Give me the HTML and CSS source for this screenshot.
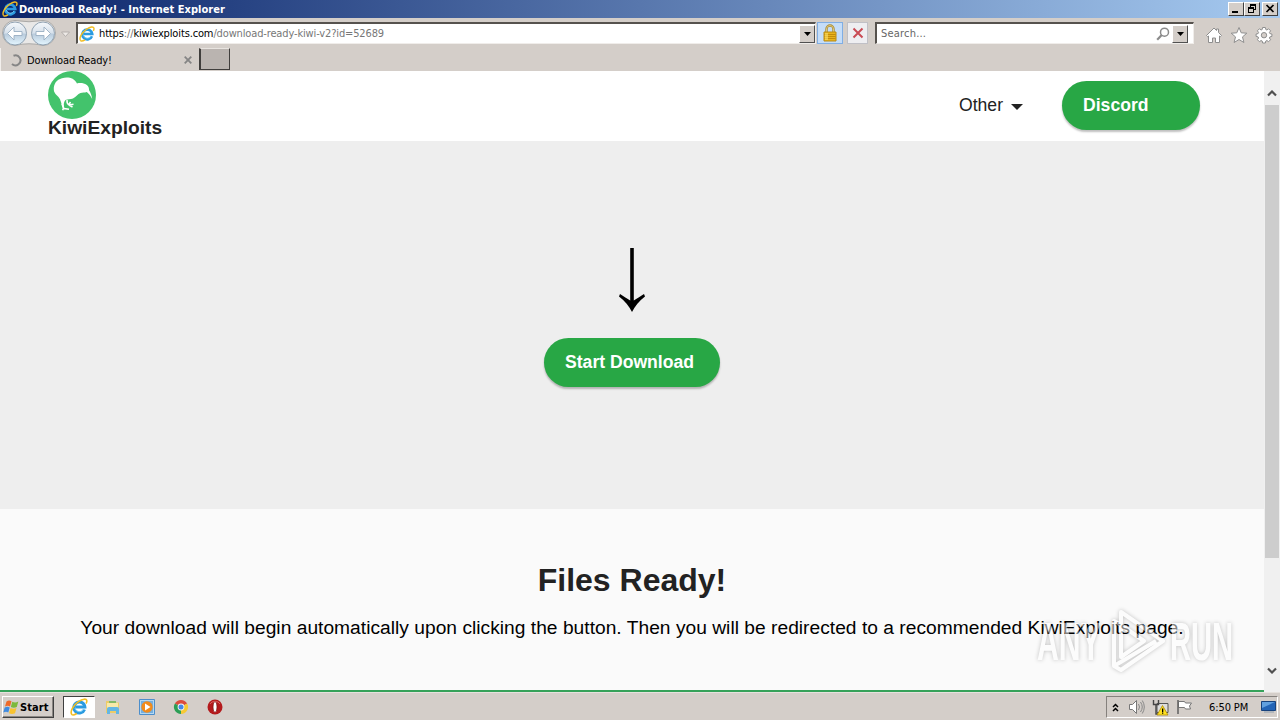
FILE: index.html
```html
<!DOCTYPE html>
<html lang="en">
<head>
	<meta charset="UTF-8">
	<meta name="viewport" content="width=device-width, initial-scale=1.0">
	<title>Download Ready!</title>
	<link rel="stylesheet" href="styles.css">
</head>
<body>
	<!-- Shared icons -->
	<svg class="sprite" width="0" height="0">
		<symbol id="ie" viewBox="0 0 16 16">
			<path d="M12.9 10.2A4.9 4.9 0 1 1 13.2 8H5" fill="none" stroke="#2b9be0" stroke-width="2.7"/>
			<path d="M12.2 9.8A4.2 4.2 0 0 1 4.3 9" fill="none" stroke="#7fd2fa" stroke-width=".8"/>
			<path d="M1.7 14.8C-.5 12 3 6.500 7.500 3.300 11 .8 15 0 15 2.700c0 .8-.3 1.500-.7 2.200" fill="none" stroke="#f2bd22" stroke-width="1.400"/>
			<path d="M1.700 14.800c1 .6 2.700 0 4.300-1" fill="none" stroke="#f2bd22" stroke-width="1.400"/>
		</symbol>
	</svg>

	<header class="titlebar">
		<svg class="titlebar-icon"><use href="#ie"/></svg>
		<span class="titlebar-text">Download Ready! - Internet Explorer</span>
		<div class="window-buttons">
			<span class="window-btn"><svg width="14" height="12"><path d="M3 8h6v2H3z"/></svg></span>
			<span class="window-btn"><svg width="14" height="12"><path d="M5 1h6v6H9V6h1V3H6v1H5zM3 4h6v6H3zm1 2v3h4V6z" fill-rule="evenodd"/></svg></span>
			<span class="window-btn window-btn-close"><svg width="14" height="12"><path d="M3.500 2l7 7m0-7l-7 7" stroke="#000" stroke-width="1.700"/></svg></span>
		</div>
	</header>

	<div class="toolbar">
		<svg class="nav-buttons" width="72" height="30" viewBox="0 0 72 30">
			<defs>
				<linearGradient id="orb" x1="0" y1="0" x2="0" y2="1">
					<stop offset="0" stop-color="#f6f9fc"/>
					<stop offset=".48" stop-color="#d7e1eb"/>
					<stop offset=".52" stop-color="#b9cbdc"/>
					<stop offset="1" stop-color="#e4f6ff"/>
				</linearGradient>
			</defs>
			<path d="M15 2.500Q29 5 43 2.500A12.500 12.500 0 0 1 43 27.500Q29 24 15 27.500A12.500 12.500 0 0 1 15 2.500" fill="#e9e8e7" stroke="#aaa9a7"/>
			<circle cx="15" cy="15.500" r="11.500" fill="url(#orb)" stroke="#92a3b3"/>
			<circle cx="43" cy="15.500" r="11.500" fill="url(#orb)" stroke="#92a3b3"/>
			<path d="M14 9l-6.500 6.500L14 22v-4.500h8v-4h-8z" fill="#fff" stroke="#9aafc3" stroke-width=".9"/>
			<path d="M44 9l6.500 6.500L44 22v-4.500h-8v-4h8z" fill="#fff" stroke="#9aafc3" stroke-width=".9"/>
			<path d="M61.500 14h8l-4 4.500z" fill="#eeeae7" stroke="#b4afac"/>
		</svg>
		<div class="field address">
			<svg class="address-icon"><use href="#ie"/></svg>
			<span class="address-text">https<i>://</i>kiwiexploits.com<i>/download-ready-kiwi-v2?id=52689</i></span>
			<span class="dropdown"><svg width="7" height="4"><path d="M0 0h7L3.500 4z"/></svg></span>
		</div>
		<span class="tool-btn tool-btn-lock">
			<svg width="16" height="18" viewBox="0 0 16 18">
				<path d="M4.500 9V5a3.500 3.500 0 0 1 7 0v4" fill="none" stroke="#a88a35" stroke-width="2.400"/>
				<path d="M4.500 9V5a3.500 3.500 0 0 1 7 0v4" fill="none" stroke="#ead58b" stroke-width=".8"/>
				<path d="M2 8h12v9H2z" fill="#e9b41c" stroke="#b98a13"/>
				<path d="M2.500 10.500h11m-11 2h11m-11 2h11" stroke="#b98108" stroke-width=".8"/>
				<path d="M3 9h3v7H3z" fill="#fbe16b" opacity=".6"/>
			</svg>
		</span>
		<span class="tool-btn tool-btn-stop">
			<svg width="12" height="12"><path d="M1.500 1.500l9 9m0-9l-9 9" stroke="#c94b55" stroke-width="2"/></svg>
		</span>
		<div class="field search">
			<span class="search-text">Search...</span>
			<svg class="search-icon" width="14" height="14"><circle cx="8.500" cy="5.200" r="4" fill="none" stroke="#8b8b8b" stroke-width="1.500"/><path d="M5.700 8L1.200 12.700" stroke="#8b8b8b" stroke-width="2.200"/></svg>
			<span class="dropdown"><svg width="7" height="4"><path d="M0 0h7L3.500 4z"/></svg></span>
		</div>
		<div class="commands">
			<svg width="18" height="18" viewBox="0 0 18 18"><path d="M1.500 9.500L9 2l2.500 2.500V3h2v3.500l3 3-1.200 1.200-.8-.7v6.500h-4V12h-3v4.500h-4V10l-.8.700z" fill="#fff" stroke="#8e8e8e"/></svg>
			<svg width="18" height="18" viewBox="0 0 18 18"><path d="M9 1.500l2.200 5.300 5.600.4-4.300 3.700 1.400 5.600L9 13.500l-4.900 3 1.400-5.600L1.200 7.200l5.600-.4z" fill="#fff" stroke="#8e8e8e"/></svg>
			<svg width="18" height="18" viewBox="0 0 18 18"><path d="M7.600 1.500h2.800l.4 2 1.100.5 1.700-1.200 2 2L14.400 6.500l.5 1.100 2 .4v2.400l-2 .5-.5 1.100 1.200 1.700-2 2-1.700-1.200-1.100.5-.4 2H7.600l-.4-2-1.100-.5-1.700 1.200-2-2L3.600 12l-.5-1.100-2-.5V8l2-.4.500-1.100-1.200-1.700 2-2L6.100 4l1.100-.5z" fill="#fff" stroke="#8e8e8e"/><circle cx="9" cy="9.200" r="2.700" fill="#d4cec9" stroke="#8e8e8e"/></svg>
		</div>
	</div>

	<nav class="tabs">
		<div class="tab">
			<svg class="tab-spinner" width="13" height="13"><path d="M4.500 1.700A5 5 0 1 1 3 10" fill="none" stroke="#858585" stroke-width="2"/></svg>
			<span class="tab-text">Download Ready!</span>
			<svg class="tab-close" width="8" height="8"><path d="M.7.700l6.600 6.600m0-6.600L.7 7.300" stroke="#858585" stroke-width="1.800"/></svg>
		</div>
		<div class="tab-new"></div>
	</nav>

	<div class="viewport">
		<main class="page">
			<div class="site-header">
				<a class="brand">
					<svg width="48" height="48" viewBox="0 0 48 48">
						<circle cx="24" cy="24" r="24" fill="#43c36c"/>
						<path d="M5.800 18.500C5.500 13 8.500 8.500 14 7.200c6-1.500 12-.5 15 5.300 3-.8 7-.5 9.500 1.300 2.300 1.500 2.500 3.500 2.600 5.400 1.600 2.800 2.700 5.400 3.100 8.800-1.500-3-3.200-5.300-5.400-7-2.400.8-4.300.4-6.300 1-3 1-4 4-7.500 5.400-2.500 1-5.500.6-7.500 1.600-1.400 1.600-2 3.500-1.500 6.200l-1.500 1.800c-1.200-4.500-1.500-8-4-11-1.800-2.300-4.500-3.500-4.700-7.500z" fill="#fff"/>
						<path d="M14 33l2 4.500 5 .8M15.500 37l-.8 2.300M19 29c-.3 2.500.6 4.200 2.300 5l4.200-.8M21 34l3.500 2M21 33.500l1.500-2.500" fill="none" stroke="#fff" stroke-width="1.500"/>
					</svg>
					<span class="brand-name">KiwiExploits</span>
				</a>
				<div class="menu">
					<a class="menu-link">Other <svg width="12" height="6"><path d="M0 0h12L6 6z" fill="#222"/></svg></a>
					<a class="btn btn-discord">Discord</a>
				</div>
			</div>
			<section class="hero">
				<svg class="hero-arrow" width="28" height="66" viewBox="0 0 28 66"><path d="M12.200 1h3.600v52.500c3-2 6.500-4 10.200-6.500l1 2.500C21 54 17 59 14 65 11 59 7 54 1 49.500L2 47c3.700 2.500 7.200 4.500 10.200 6.500z"/></svg>
				<a class="btn btn-download">Start Download</a>
			</section>
			<section class="files">
				<h1>Files Ready!</h1>
				<p>Your download will begin automatically upon clicking the button. Then you will be redirected to a recommended KiwiExploits page.</p>
			</section>
		</main>
		<div class="scrollbar">
			<span class="scroll-arrow"><svg width="10" height="7"><path d="M1 5.500l4-4 4 4" fill="none" stroke="#505050" stroke-width="2.200"/></svg></span>
			<span class="scroll-thumb"></span>
			<span class="scroll-arrow scroll-arrow-down"><svg width="10" height="7"><path d="M1 1.500l4 4 4-4" fill="none" stroke="#505050" stroke-width="2.200"/></svg></span>
		</div>
		<div class="watermark">
			<span class="watermark-any">ANY</span>
			<svg width="58" height="64" viewBox="0 0 58 64"><path d="M14 3l42 29-42 29-7-4V12l7 4zM14 16v32l23-16zM7 57l42-25" fill="none" stroke="#fff" stroke-width="4" stroke-linejoin="round"/></svg>
			<span class="watermark-run">RUN</span>
		</div>
	</div>

	<footer class="taskbar">
		<div class="start">
			<svg width="17" height="16" viewBox="0 0 17 16">
				<path d="M3.500 2.500C5.500 1 7 1.300 8.500 2.300L7 7.500C5.500 6.500 4 6.500 2 7.500z" fill="#ee6a2a"/>
				<path d="M9.300 2.800c2 1 4 1 6-.3L13.800 8c-2 1-4 1-6 0z" fill="#7cb93c"/>
				<path d="M1.700 8.500c2-1 3.500-1 5 0L5.300 13.500c-1.500-1-3-1-5 0z" fill="#3f8be0"/>
				<path d="M7.500 9c2 1 4 1 6 0L12 14.300c-2 1-4 1-6 0z" fill="#f8c330"/>
			</svg>
			<span>Start</span>
		</div>
		<div class="task task-active"><svg width="18" height="18"><use href="#ie"/></svg></div>
		<div class="task">
			<svg width="18" height="18" viewBox="0 0 18 18"><path d="M2 3h5l1 1.500h7V15H2z" fill="#edcc68"/><path d="M3 5h11v5H3z" fill="#f9e9a9"/><path d="M5 3h7v2H5z" fill="#84b966"/><path d="M3 11q0-2 2-2h8q2 0 2 2v5h-3v-3H6v3H3z" fill="#64b6e4"/></svg>
		</div>
		<div class="task">
			<svg width="18" height="18" viewBox="0 0 18 18"><path d="M1.500 1.500h15v15h-15z" fill="#b4d8f2" stroke="#4c8ecb"/><path d="M3 3h12v12H3z" fill="#74afe0"/><circle cx="9" cy="9" r="5.700" fill="#f28b1b"/><path d="M7 5.500v7L12.500 9z" fill="#fff"/></svg>
		</div>
		<div class="task">
			<svg width="16" height="16" viewBox="0 0 16 16"><path d="M8 8L1.900 4.500A7 7 0 0 1 14.100 4.500z" fill="#dc4b3d"/><path d="M8 8L1.900 4.500A7 7 0 0 0 8 15z" fill="#2c9e55"/><path d="M8 8L14.100 4.500A7 7 0 0 1 8 15z" fill="#f7c933"/><circle cx="8" cy="8" r="3.400" fill="#f5f5f5"/><circle cx="8" cy="8" r="2.500" fill="#4687e8"/></svg>
		</div>
		<div class="task">
			<svg width="16" height="16" viewBox="0 0 16 16"><circle cx="8" cy="8" r="7.500" fill="#b41a1c"/><path d="M3 5a6 6 0 0 1 10 0" fill="none" stroke="#dc6261"/><ellipse cx="8" cy="8" rx="2" ry="5.300" fill="#fff" stroke="#761010" stroke-width=".7"/></svg>
		</div>
		<div class="tray">
			<svg width="7" height="9"><path d="M1 4l2.500-2.500L6 4M1 8l2.500-2.500L6 8" fill="none" stroke="#000" stroke-width="1.500"/></svg>
			<svg class="tray-sound" width="17" height="16" viewBox="0 0 17 16"><path d="M1.500 5.500h3l4-4v13l-4-4h-3z" fill="#fff" stroke="#777"/><path d="M10.500 5q2 3 0 6M12.500 3q3.500 5 0 10M14.300 1.500q4 6.500 0 13" fill="none" stroke="#888"/></svg>
			<svg class="tray-net" width="17" height="17" viewBox="0 0 17 17"><path d="M5 4.500h11v9H5z" fill="#ddd" stroke="#555"/><path d="M1.500 1v4.500h5V1M4 5.500V15h4" fill="none" stroke="#444" stroke-width="1.400"/><path d="M10.500 6.500l5.500 9.500H5z" fill="#ffe11f" stroke="#ac8a0b" stroke-width=".8"/><path d="M10 9.500h1.300v3.500H10zm0 4h1.300v1.200H10z"/></svg>
			<svg class="tray-flag" width="17" height="16" viewBox="0 0 17 16"><path d="M2.500 2.500h6l1 1.500h6l-2 3 1 3h-5l-1-1.500h-6z" fill="#fff" stroke="#777"/><path d="M2 1v14" stroke="#666" stroke-width="1.600"/></svg>
			<span class="clock">6:50 PM</span>
			<svg class="tray-desktop" width="15" height="14" viewBox="0 0 15 14"><path d="M.5 1.500h14v9H.5z" fill="#2364b6" stroke="#17427d"/><path d="M1 2h13L1 8z" fill="#61a0df"/><path d="M3 12h10" stroke="#8f9eae"/></svg>
		</div>
	</footer>
</body>
</html>
```
FILE: styles.css
```css
* {
	box-sizing: border-box;
}

body {
	display: flex;
	flex-direction: column;
	width: 1280px;
	height: 720px;
	margin: 0;
	overflow: hidden;
	background-color: #d4cec9;
	color: #000;
	font-family: "DejaVu Sans Condensed", "DejaVu Sans", sans-serif;
	font-stretch: condensed;
	font-size: 11px;
}

svg {
	display: block;
	flex: none;
}

.sprite {
	position: absolute;
}

/* Window */
.titlebar {
	display: flex;
	flex: none;
	height: 18px;
	align-items: center;
	padding: 0 2px;
	background: linear-gradient(90deg, #0a246a, #a6caf0);
	color: #fff;
	white-space: nowrap;
}

.titlebar-icon {
	width: 16px;
	height: 16px;
	margin-right: 1px;
}

.titlebar-text {
	font-weight: bold;
	letter-spacing: .04px;
}

.window-buttons {
	display: flex;
	margin-left: auto;
}

.window-btn {
	width: 16px;
	height: 14px;
	border: 1px solid;
	border-color: #fff #404040 #404040 #fff;
	background-color: #d4cec9;
}

.window-btn-close {
	margin-left: 2px;
}

.toolbar {
	display: flex;
	flex: none;
	height: 30px;
	align-items: center;
}

.nav-buttons {
	margin-right: 4px;
}

.field {
	display: flex;
	height: 22px;
	align-items: center;
	border: 1px solid #f0edea;
	border-top: 2px solid #56524e;
	border-left: 2px solid #56524e;
	background-color: #fff;
	white-space: nowrap;
}

.address {
	width: 740px;
	padding-left: 1px;
}

.address-icon {
	width: 16px;
	height: 16px;
	margin-right: 4px;
}

.address-text {
	letter-spacing: -.14px;
}

.address-text i {
	color: #777;
	font-style: normal;
}

.dropdown {
	display: flex;
	width: 16px;
	height: 18px;
	align-items: center;
	justify-content: center;
	margin-left: auto;
	border: 1px solid;
	border-color: #fff #505050 #505050 #fff;
	background-color: #d4cec9;
}

.tool-btn {
	display: flex;
	height: 22px;
	align-items: center;
	justify-content: center;
	border: 1px solid;
}

.tool-btn-lock {
	width: 26px;
	margin-left: 1px;
	border-color: #80aee4;
	background-color: #c5ddf8;
}

.tool-btn-stop {
	width: 21px;
	margin-left: 4px;
	border-color: #c0c0c6;
	background-color: #eeeef1;
}

.search {
	width: 319px;
	margin-left: 7px;
	padding: 0 5px 0 4px;
}

.search-text {
	color: #666;
	letter-spacing: .2px;
}

.search-icon {
	margin-left: auto;
	margin-right: 2px;
}

.search .dropdown {
	margin-left: 0;
}

.commands {
	display: flex;
	gap: 7px;
	margin: 4px 7px 0 auto;
}

/* Tabs */
.tabs {
	display: flex;
	flex: none;
	height: 23px;
}

.tab {
	display: flex;
	width: 199px;
	align-items: center;
	padding: 1px 7px 0 8px;
	border-left: 1px solid #f3f0ed;
}

.tab-text {
	margin-left: 5px;
	letter-spacing: -.14px;
}

.tab-close {
	margin-left: auto;
}

.tab-new {
	width: 31px;
	height: 22px;
	border: 1px solid #403e3c;
	border-top-color: #e8e4e0;
	border-left-width: 2px;
	background-color: #bab4b0;
}

/* Page */
.viewport {
	position: relative;
	display: flex;
	flex: none;
	height: 621px;
}

.page {
	width: 1264px;
	border-bottom: 2px solid #36a25a;
	background-color: #fafafa;
	font-family: "Liberation Sans", Arial, sans-serif;
	font-stretch: normal;
}

.site-header {
	display: flex;
	height: 70px;
	justify-content: space-between;
	padding: 0 64px 0 48px;
	background-color: #fff;
	color: #222;
}

.brand-name {
	display: block;
	font-size: 19.2px;
	font-weight: bold;
	line-height: 17px;
}

.menu {
	display: flex;
	height: 68px;
	align-items: center;
	gap: 39px;
}

.menu-link {
	display: flex;
	align-items: center;
	gap: 8px;
	font-size: 17.6px;
}

.menu-link svg {
	margin-top: 3px;
}

.btn {
	height: 49px;
	padding-left: 21px;
	border-radius: 25px;
	background-color: #28a745;
	box-shadow: 0 2px 2px rgba(0, 0, 0, .25);
	color: #fff;
	font-size: 17.6px;
	font-weight: bold;
	line-height: 48px;
}

.btn-discord {
	width: 138px;
}

.hero {
	display: flex;
	flex-direction: column;
	height: 368px;
	align-items: center;
	padding-top: 106px;
	background-color: #eee;
}

.btn-download {
	width: 176px;
	margin-top: 25px;
}

.files {
	padding-top: 52px;
	text-align: center;
}

.files h1 {
	margin: 0;
	color: #222;
	font-size: 32px;
	line-height: 38px;
}

.files p {
	margin: 17px 0 0;
	font-size: 19.2px;
	line-height: 24px;
	letter-spacing: .02px;
	white-space: nowrap;
}

.scrollbar {
	display: flex;
	width: 16px;
	flex-direction: column;
	align-items: center;
	background-color: #f0f0f0;
}

.scroll-arrow {
	padding: 19px 0 8px;
}

.scroll-thumb {
	width: 14px;
	height: 453px;
	background-color: #cdcdcd;
}

.scroll-arrow-down {
	margin-top: auto;
	padding: 0 0 18px;
}

.watermark {
	position: absolute;
	top: 538px;
	left: 1037px;
	display: flex;
	width: 197px;
	align-items: center;
	justify-content: space-between;
	color: #fff;
	font-family: "Liberation Sans", Arial, sans-serif;
	font-size: 54px;
	font-weight: bold;
	filter: drop-shadow(0 0 2px rgba(0, 0, 0, .45));
	opacity: .5;
}

.watermark span {
	width: 64px;
	line-height: 64px;
	white-space: nowrap;
}

.watermark-any {
	transform: scaleX(.56);
	transform-origin: left;
}

.watermark-run {
	transform: scaleX(.54);
	transform-origin: left;
}

/* Taskbar */
.taskbar {
	display: flex;
	flex: none;
	height: 28px;
	align-items: center;
	padding: 1px 2px 0;
	border-top: 1px solid #e6e2de;
}

.start {
	display: flex;
	width: 52px;
	height: 22px;
	align-items: center;
	margin-right: 9px;
	border: 1px solid;
	border-color: #fff #404040 #404040 #fff;
	box-shadow: inset -1px -1px 0 #8b8783;
	font-weight: bold;
}

.start span {
	letter-spacing: .1px;
}

.task {
	display: flex;
	width: 34px;
	height: 22px;
	align-items: center;
	justify-content: center;
}

.task-active {
	width: 32px;
	margin-right: 1px;
	border: 1px solid;
	border-color: #404040 #fff #fff #404040;
	background-color: #fff;
}

.tray {
	display: flex;
	width: 172px;
	height: 22px;
	align-items: center;
	margin-left: auto;
	padding-left: 5px;
	border: 1px solid;
	border-color: #85817d #fff #fff #85817d;
}

.tray-sound {
	margin-left: 9px;
}

.tray-net {
	margin-left: 7px;
}

.tray-flag {
	margin-left: 7px;
}

.clock {
	margin-left: 16px;
	letter-spacing: -.1px;
	white-space: nowrap;
}

.tray-desktop {
	margin-left: auto;
	margin-right: 1px;
}
```
